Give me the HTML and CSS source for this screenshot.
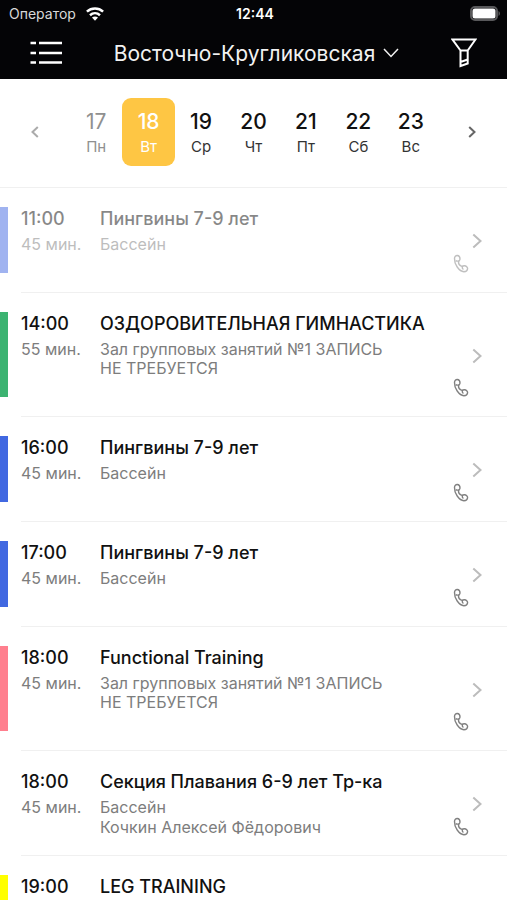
FILE: index.html
```html
<!DOCTYPE html>
<html lang="ru">
<head>
<meta charset="utf-8">
<meta name="viewport" content="width=device-width, initial-scale=1">
<title>Расписание</title>
<link rel="stylesheet" href="styles.css">
</head>
<body>
<svg class="sprite" aria-hidden="true">
  <symbol id="phone" viewBox="0 0 16 20">
    <path d="M1.500 4.500C1.500 2.500 2.900 1.400 4.300 1.500C5.900 1.600 7 3.200 7 5C7 6.600 5.500 7 5.500 8.300C5.500 9.700 6.900 11.700 8.300 12.200C9.500 12.600 10.100 11.600 11.500 11.700C13.200 11.800 14.700 13.200 14.600 14.700C14.400 16.600 12.700 17.700 10.900 17.700C8.700 17.600 6 15.500 4.200 13C2.300 10.300 1.400 7.300 1.500 4.500ZM3 6.500C3.700 7.400 5.200 7.300 6.200 6.400M9.700 12.300C8.900 13.400 9.300 14.900 10.500 15.400"/>
  </symbol>
  <symbol id="chevron" viewBox="0 0 10 16">
    <path d="M1.300 1.500L8.500 8L1.300 14.500"/>
  </symbol>
</svg>

<header class="topbar">
  <div class="status">
    <div class="carrier">
      <span>Оператор</span>
      <svg class="wifi" viewBox="0 0 20 14" aria-hidden="true">
        <path class="arc" d="M1.900 4.700C6.500 .5 13.500 .5 18.100 4.700M5 8.200C7.900 5.600 12.100 5.600 15 8.200"/>
        <path class="dot" d="M7 10.600C8.700 9.200 11.300 9.200 13 10.600L10 13.800Z"/>
      </svg>
    </div>
    <time class="clock">12:44</time>
    <div class="power">
      <svg class="battery" viewBox="0 0 31 15" aria-hidden="true">
        <rect class="shell" x="1" y="1" width="26" height="13" rx="4"/>
        <rect class="charge" x="2.500" y="2.500" width="23" height="10" rx="2.500"/>
        <path class="cap" d="M28.500 5C30.500 6 30.500 9 28.500 10Z"/>
      </svg>
    </div>
  </div>
  <div class="titlebar">
    <button class="icon-button" type="button" aria-label="Меню">
      <svg class="menu" viewBox="0 0 32 24" aria-hidden="true">
        <path d="M.5 2H6M9 2H32M.5 12H6M9 12H32M.5 21.500H6M9 21.500H32"/>
      </svg>
    </button>
    <button class="club" type="button">
      <span>Восточно-Кругликовская</span>
      <svg class="down" viewBox="0 0 16 10" aria-hidden="true"><path d="M1 1L8 8.500L15 1"/></svg>
    </button>
    <button class="icon-button" type="button" aria-label="Фильтр">
      <svg class="funnel" viewBox="0 0 26 30" aria-hidden="true">
        <path d="M1.500 1.500H24.500L16.700 12.500V25.500L9.500 28V12.500ZM9.500 12.500H16.700M9.500 24L16.700 21.500"/>
      </svg>
    </button>
  </div>
</header>

<nav class="week" aria-label="Неделя">
  <button class="arrow prev" type="button" aria-label="Предыдущая неделя"><svg viewBox="0 0 8 12" aria-hidden="true"><path d="M6.800 1L1.500 6L6.800 11"/></svg></button>
  <div class="days">
    <button class="day past" type="button"><b>17</b><span>Пн</span></button>
    <button class="day selected" type="button"><b>18</b><span>Вт</span></button>
    <button class="day" type="button"><b>19</b><span>Ср</span></button>
    <button class="day" type="button"><b>20</b><span>Чт</span></button>
    <button class="day" type="button"><b>21</b><span>Пт</span></button>
    <button class="day" type="button"><b>22</b><span>Сб</span></button>
    <button class="day" type="button"><b>23</b><span>Вс</span></button>
  </div>
  <button class="arrow next" type="button" aria-label="Следующая неделя"><svg viewBox="0 0 8 12" aria-hidden="true"><path d="M1.200 1L6.500 6L1.200 11"/></svg></button>
</nav>

<main class="schedule">
  <article class="lesson past pool">
    <div class="body">
      <div class="when"><time>11:00</time><p>45 мин.</p></div>
      <div class="what"><h2>Пингвины 7-9 лет</h2><p>Бассейн</p><div class="extra"><p></p><svg class="phone"><use href="#phone"/></svg></div></div>
      <svg class="chevron"><use href="#chevron"/></svg>
    </div>
  </article>
  <article class="lesson health">
    <div class="body">
      <div class="when"><time>14:00</time><p>55 мин.</p></div>
      <div class="what"><h2>ОЗДОРОВИТЕЛЬНАЯ ГИМНАСТИКА</h2><p>Зал групповых занятий №1 ЗАПИСЬ НЕ ТРЕБУЕТСЯ</p><div class="extra"><p></p><svg class="phone"><use href="#phone"/></svg></div></div>
      <svg class="chevron"><use href="#chevron"/></svg>
    </div>
  </article>
  <article class="lesson pool">
    <div class="body">
      <div class="when"><time>16:00</time><p>45 мин.</p></div>
      <div class="what"><h2>Пингвины 7-9 лет</h2><p>Бассейн</p><div class="extra"><p></p><svg class="phone"><use href="#phone"/></svg></div></div>
      <svg class="chevron"><use href="#chevron"/></svg>
    </div>
  </article>
  <article class="lesson pool">
    <div class="body">
      <div class="when"><time>17:00</time><p>45 мин.</p></div>
      <div class="what"><h2>Пингвины 7-9 лет</h2><p>Бассейн</p><div class="extra"><p></p><svg class="phone"><use href="#phone"/></svg></div></div>
      <svg class="chevron"><use href="#chevron"/></svg>
    </div>
  </article>
  <article class="lesson functional">
    <div class="body">
      <div class="when"><time>18:00</time><p>45 мин.</p></div>
      <div class="what"><h2>Functional Training</h2><p>Зал групповых занятий №1 ЗАПИСЬ НЕ ТРЕБУЕТСЯ</p><div class="extra"><p></p><svg class="phone"><use href="#phone"/></svg></div></div>
      <svg class="chevron"><use href="#chevron"/></svg>
    </div>
  </article>
  <article class="lesson">
    <div class="body">
      <div class="when"><time>18:00</time><p>45 мин.</p></div>
      <div class="what"><h2>Секция Плавания 6-9 лет Тр-ка</h2><p>Бассейн</p><div class="extra"><p>Кочкин Алексей Фёдорович</p><svg class="phone"><use href="#phone"/></svg></div></div>
      <svg class="chevron"><use href="#chevron"/></svg>
    </div>
  </article>
  <article class="lesson strength">
    <div class="body">
      <div class="when"><time>19:00</time></div>
      <div class="what"><h2>LEG TRAINING</h2></div>
    </div>
  </article>
</main>
</body>
</html>
```
FILE: styles.css
```css
* {
  box-sizing: border-box;
}

body {
  margin: 0;
  height: 100vh;
  overflow: hidden;
  display: flex;
  flex-direction: column;
  background: #fff;
  color: #111;
  font-family: Inter, "Liberation Sans", sans-serif;
}

button {
  margin: 0;
  padding: 0;
  border: 0;
  background: none;
  color: inherit;
  font: inherit;
}

h2,
p {
  margin: 0;
}

svg {
  display: block;
  flex: none;
  fill: none;
  stroke: currentColor;
}

.sprite {
  position: absolute;
  width: 0;
  height: 0;
}

.topbar {
  flex: none;
  background: #040406;
  color: #fff;
}

.status {
  display: grid;
  grid-template-columns: 1fr auto 1fr;
  align-items: center;
  height: 27px;
  padding: 0 6px 0 9px;
  font-size: 14px;
}

.carrier {
  display: flex;
  align-items: center;
  gap: 9px;
  color: #d8d8d8;
}

.wifi {
  width: 20px;
  height: 14px;
  color: #fff;
}

.wifi .arc {
  stroke-width: 2.5;
}

.wifi .dot {
  fill: currentColor;
  stroke: none;
}

.clock {
  font-weight: 600;
}

.power {
  justify-self: end;
}

.battery {
  width: 31px;
  height: 15px;
}

.battery .shell {
  stroke: #58585a;
  stroke-width: 2;
}

.battery .charge {
  fill: #fff;
  stroke: none;
}

.battery .cap {
  fill: #58585a;
  stroke: none;
}

.titlebar {
  display: flex;
  align-items: center;
  justify-content: space-between;
  height: 52px;
  padding: 0 30px;
}

.menu {
  width: 32px;
  height: 24px;
  stroke-width: 2.5;
}

.club {
  display: flex;
  align-items: center;
  gap: 8px;
  font-size: 21px;
  color: #f2f2f2;
}

.down {
  width: 16px;
  height: 10px;
  stroke-width: 1.5;
}

.funnel {
  width: 26px;
  height: 30px;
  stroke-width: 2;
}

.week {
  flex: none;
  display: flex;
  align-items: center;
  height: 109px;
  padding-bottom: 2px;
  border-bottom: 1px solid #f0f0f0;
}

.arrow {
  flex: none;
  display: flex;
  justify-content: center;
  width: 70px;
  height: 44px;
  align-items: center;
}

.arrow svg {
  width: 8px;
  height: 12px;
  stroke-width: 2;
}

.prev {
  color: #ababab;
}

.next {
  color: #666;
}

.days {
  flex: 1;
  display: grid;
  grid-template-columns: repeat(7, 1fr);
}

.day {
  display: flex;
  flex-direction: column;
  align-items: center;
  gap: 1px;
  height: 68px;
  padding-top: 12px;
  border-radius: 9px;
  font-size: 15px;
  line-height: 24px;
  color: #333;
}

.day b {
  font-size: 21px;
  font-weight: 500;
  color: #111;
}

.day.past,
.day.past b {
  color: #909090;
}

.day.past b {
  font-weight: 400;
}

.day.selected,
.day.selected b {
  color: #fff;
}

.day.selected {
  background: #fec644;
}

.schedule {
  flex: 1;
  min-height: 0;
  overflow: hidden;
}

.lesson {
  display: flex;
  color: #111;
}

.lesson::before {
  content: "";
  flex: none;
  width: 8px;
  margin: 19px 13px 20px 0;
  background: var(--tone, transparent);
}

.pool {
  --tone: #4168e1;
}

.health {
  --tone: #3cb371;
}

.functional {
  --tone: #ff7f8e;
}

.strength {
  --tone: #ffff00;
}

.body {
  flex: 1;
  display: flex;
  padding: 20px 25px 18px 0;
  border-bottom: 1px solid #f0f0f0;
}

.past::before,
.past .when,
.past .what {
  opacity: 0.5;
}

.when {
  flex: none;
  width: 79px;
}

.what {
  flex: 1;
}

.lesson time,
.lesson h2 {
  display: block;
  font-size: 18px;
  font-weight: 500;
  line-height: 22px;
  margin-bottom: 5px;
}

.lesson p {
  font-size: 16px;
  line-height: 19px;
  color: #7d7d7d;
}

.what > p {
  max-width: 300px;
}

.extra {
  display: flex;
  align-items: center;
  justify-content: space-between;
  min-height: 20px;
}

.phone {
  width: 16px;
  height: 20px;
  margin-right: 3px;
  margin-left: auto;
  color: #808080;
  stroke-width: 1.4;
}

.chevron {
  align-self: center;
  width: 10px;
  height: 16px;
  color: #bcbcbc;
  stroke-width: 2;
}
```
